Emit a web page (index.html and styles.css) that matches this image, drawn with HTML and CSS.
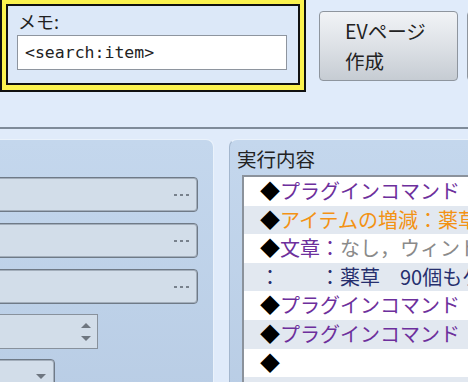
FILE: index.html
```html
<!doctype html>
<html lang="ja">
  <head>
    <meta charset="UTF-8" />
    <title>EV Page</title>
    <link rel="stylesheet" href="styles.css">
  </head>
  <body>
    <div class="top">
        <div class="memo-frame">
            <div class="memo">
                <div class="memo-label">メモ:</div>
                <input class="memo-input" value="<search:item>" readonly />
            </div>
        </div>
        <button class="btn btn-ev">EVページ<br>作成</button>
        <button class="btn btn-next"></button>
    </div>

    <div class="main">
        <div class="panel panel-left">
            <div class="field"><span class="dots"><i></i><i></i><i></i></span></div>
            <div class="field"><span class="dots"><i></i><i></i><i></i></span></div>
            <div class="field"><span class="dots"><i></i><i></i><i></i></span></div>
            <div class="field field-spin">
                <span class="spin"><i class="up"></i><i class="down"></i></span>
            </div>
            <div class="field field-select"><i class="down"></i></div>
        </div>

        <div class="panel panel-right">
            <div class="panel-title">実行内容</div>
            <div class="list">
                <div class="row"><span class="mark">◆</span><span class="plugin">プラグインコマンド：TextScriptBase</span></div>
                <div class="row alt"><span class="mark">◆</span><span class="item">アイテムの増減：薬草 + 90</span></div>
                <div class="row"><span class="mark">◆</span><span class="plugin">文章：</span><span class="muted">なし，ウィンドウ，下</span></div>
                <div class="row alt"><span class="cont">：　　：薬草　90個もゲット！</span></div>
                <div class="row"><span class="mark">◆</span><span class="plugin">プラグインコマンド：TextScriptBase</span></div>
                <div class="row alt"><span class="mark">◆</span><span class="plugin">プラグインコマンド：TextScriptBase</span></div>
                <div class="row"><span class="mark">◆</span></div>
                <div class="row alt"></div>
            </div>
        </div>
    </div>
  </body>
</html>
```

FILE: styles.css
```css
* {
    box-sizing: border-box;
}

body {
    margin: 0;
    width: 468px;
    height: 382px;
    overflow: hidden;
    background-color: #e0ebfa;
    font-family: "Noto Sans CJK JP", "Noto Sans", sans-serif;
    color: #222;
}

/* top bar */
.top {
    height: 129px;
    display: flex;
    align-items: flex-start;
    border-bottom: 2px solid #7f8b99;
}

.memo-frame {
    margin-top: -3px;
    width: 306px;
    height: 95px;
    border: 2px solid #111;
    background-color: #fbf24f;
    padding: 5px 4px 5px 4px;
    flex-shrink: 0;
}

.memo {
    height: 100%;
    border: 2px solid #111;
    background-color: #dce8f8;
    padding: 4px 9px 0 9px;
}

.memo-label {
    font-size: 18px;
    line-height: 22px;
    margin-bottom: 3px;
    padding-left: 1px;
}

.memo-input {
    display: block;
    width: 270px;
    height: 35px;
    border: 1px solid #8e959f;
    background: #fff;
    padding: 0 7px;
    font-family: "DejaVu Sans Mono", monospace;
    font-size: 16.5px;
    color: #222;
    outline: none;
}

.btn {
    flex-shrink: 0;
    margin-top: 11px;
    height: 70px;
    border: 1px solid #8e959e;
    border-radius: 4px;
    background: linear-gradient(#f1f3f6, #dde1e6 50%, #c6ccd3);
    font-family: "Noto Sans CJK JP", "Noto Sans", sans-serif;
    font-size: 19.5px;
    line-height: 30px;
    color: #222;
    text-align: left;
    padding: 0 0 0 25px;
}

.btn-ev {
    margin-left: 13px;
    width: 139px;
}

.btn-next {
    margin-left: 9px;
    width: 60px;
}

/* panels */
.main {
    display: flex;
    gap: 15px;
    padding-top: 10px;
}

.panel {
    flex-shrink: 0;
    height: 260px;
    background: linear-gradient(#c4d7ed, #b9cde5);
    border: 1px solid #eaf2fb;
    border-bottom: none;
}

.panel-left {
    margin-left: -100px;
    width: 314px;
    border-radius: 0 8px 0 0;
    padding: 37px 15px 0 0;
}

.panel-right {
    width: 300px;
    border-left-color: #a4b7ce;
    border-radius: 8px 0 0 0;
}

.field {
    height: 35px;
    margin-bottom: 11px;
    background-color: #d2dde9;
    border: 1px solid #6f7a87;
    box-shadow: inset 0 0 0 1px #a3aebb;
    border-radius: 0 4px 4px 0;
    display: flex;
    align-items: center;
    justify-content: flex-end;
    padding-right: 8px;
}

.dots {
    display: flex;
    gap: 3px;
}

.dots i {
    display: block;
    width: 3px;
    height: 2px;
    background-color: #78818c;
}

.field-spin {
    width: 197px;
    margin-top: -1px;
    margin-bottom: 10px;
    border-radius: 0;
    border-color: #88919c;
    box-shadow: none;
    padding-right: 6px;
}

.spin {
    display: flex;
    flex-direction: column;
    gap: 8px;
}

.up,
.down {
    display: block;
    width: 0;
    height: 0;
    border-left: 5px solid transparent;
    border-right: 5px solid transparent;
}

.up {
    border-bottom: 5px solid #6e7680;
}

.down {
    border-top: 5px solid #6e7680;
}

.field-select {
    width: 154px;
    height: 40px;
    align-items: flex-start;
    padding-top: 14px;
    border-radius: 0 4px 0 0;
    padding-right: 8px;
}

.panel-title {
    font-size: 19.5px;
    line-height: 30px;
    padding: 4px 0 0 7px;
    height: 35px;
}

.list {
    margin-left: 12px;
    border-top: 2px solid #8b929b;
    border-left: 2px solid #8b929b;
    background-color: #fff;
}

.row {
    height: 28.6px;
    line-height: 28.6px;
    padding-left: 16px;
    font-size: 20px;
    white-space: nowrap;
    overflow: hidden;
}

.row.alt {
    background-color: #e2e8f0;
}

.mark {
    color: #000;
}

.plugin {
    color: #6d2f9c;
}

.item {
    color: #f39214;
}

.muted {
    color: #8a8a8a;
}

.cont {
    color: #262f6e;
}
```
